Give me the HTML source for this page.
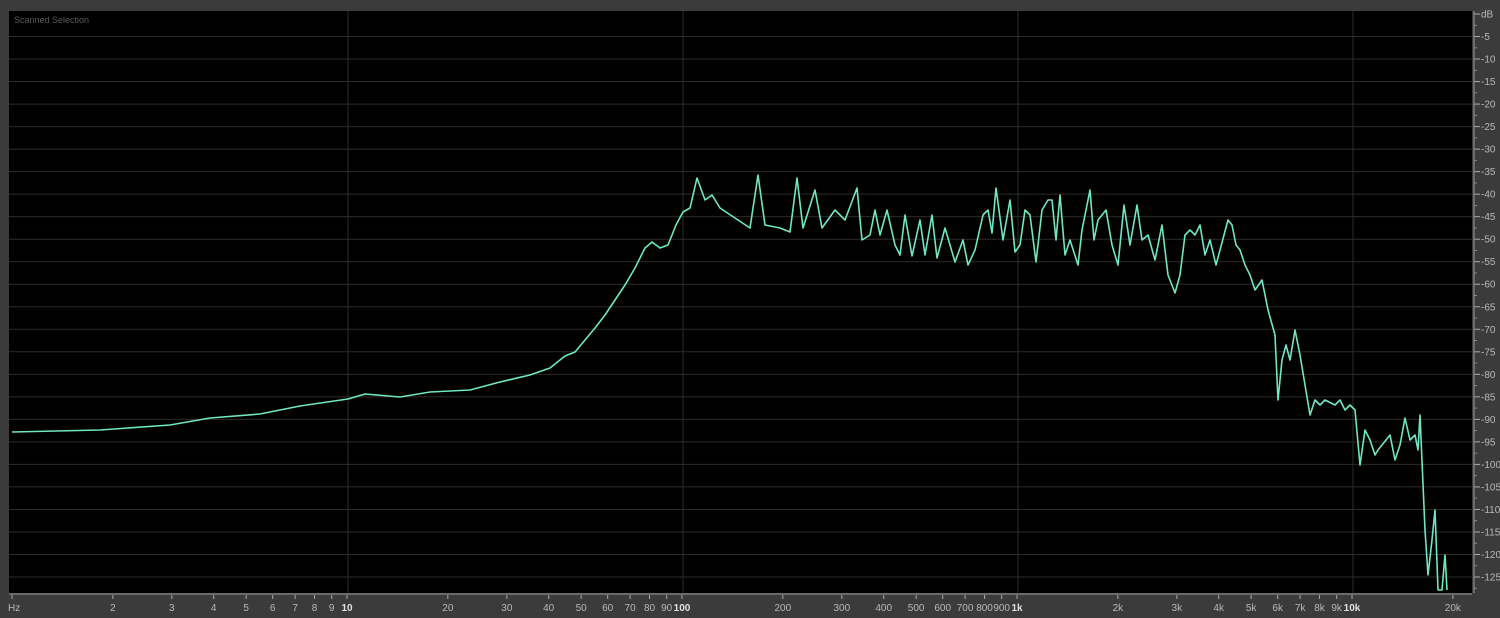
<!DOCTYPE html>
<html><head><meta charset="utf-8"><style>
html,body{margin:0;padding:0;background:#3b3b3b;width:1500px;height:618px;overflow:hidden;font-family:"Liberation Sans",sans-serif}
svg{position:absolute;left:0;top:0}
</style></head><body>
<svg id="s" width="1500" height="618" xmlns="http://www.w3.org/2000/svg">
<rect x="0" y="0" width="1500" height="618" fill="#3b3b3b"/>
<rect x="9" y="11" width="1463" height="582" fill="#000"/>
<g id="grid"></g>
<text x="14" y="23" font-size="9" fill="#5a5a5a">Scanned Selection</text>
<g id="lab" font-size="10" fill="#b8b8b8"></g>
<polyline fill="none" stroke="#6fe6c4" stroke-width="1.6" stroke-linejoin="round" points="12,432 100,430 170,425 210,418 260,414 300,406 348,399 365,394 400,397 430,392 470,390 500,382 530,375 550,368 565,356 575,352 585,340 595,328 605,315 615,300 625,285 635,268 645,248 652,242 660,248 668,245 676,225 683,212 690,208 697,178 705,200 712,195 720,208 735,218 750,228 758,175 765,225 780,228 790,232 797,178 803,228 815,190 822,228 835,210 845,220 857,188 862,240 870,235 875,210 880,235 887,210 895,245 900,255 905,215 912,256 920,220 925,255 932,215 937,258 945,228 955,262 963,240 968,265 975,250 983,215 988,210 992,233 996,188 1003,240 1010,200 1015,252 1020,245 1025,210 1030,215 1036,262 1042,210 1048,200 1052,200 1056,240 1060,195 1065,255 1070,240 1078,265 1082,230 1090,190 1094,240 1098,220 1106,210 1112,245 1118,265 1124,205 1130,245 1137,205 1142,240 1148,235 1155,260 1162,225 1168,275 1175,293 1180,275 1185,235 1190,230 1195,235 1200,225 1205,255 1210,240 1216,265 1220,250 1228,220 1232,225 1236,245 1240,250 1245,265 1250,275 1255,290 1262,280 1268,310 1275,335 1278,400 1282,360 1286,345 1290,360 1295,330 1300,355 1305,385 1310,415 1315,400 1320,405 1325,400 1335,405 1340,400 1345,410 1350,405 1355,410 1360,465 1365,430 1370,440 1375,455 1378,450 1382,445 1390,435 1395,460 1400,445 1405,418 1410,440 1415,435 1418,450 1420,415 1425,530 1428,575 1432,540 1435,510 1438,590 1442,590 1445,555 1447,590"/>
</svg>
<script>
var ns="http://www.w3.org/2000/svg",g=document.getElementById('grid'),l=document.getElementById('lab');
function el(p,t,a,txt){var e=document.createElementNS(ns,t);for(var k in a)e.setAttribute(k,a[k]);if(txt)e.textContent=txt;p.appendChild(e);return e;}
for(var k=0;k<=25;k++){var y=14+k*22.52;
 if(k>0)el(g,'line',{x1:9,x2:1472,y1:y,y2:y,stroke:'#2c2c2c','stroke-width':1});
 el(l,'text',{x:1481,y:y+3.5},k==0?'dB':'-'+(k*5));
 el(l,'line',{x1:1474,x2:1480,y1:y,y2:y,stroke:'#aaa'});
 el(l,'line',{x1:1474,x2:1477,y1:y+11.26,y2:y+11.26,stroke:'#888'});}
el(l,'line',{x1:1474,x2:1474,y1:11,y2:593,stroke:'#999'});
el(l,'line',{x1:9,x2:1472,y1:594,y2:594,stroke:'#999'});
[348,683,1018,1353].forEach(function(x){el(g,'line',{x1:x,x2:x,y1:11,y2:593,stroke:'#22302a'});});
function X(f){return 12+335*Math.log10(f);}
var labs=[[1,'Hz']];
[1,10,100,1000].forEach(function(d){for(var i=2;i<=9;i++){var f=i*d;var t=d>=1000?(i*d/1000)+'k':''+f;labs.push([f,t]);}labs.push([d*10,d*10>=1000?(d*10/1000)+'k':''+(d*10)]);});
labs.push([20000,'20k']);
labs.forEach(function(a){var x=X(a[0]);el(l,'line',{x1:x,x2:x,y1:595,y2:599,stroke:'#aaa'});
 var big=[10,100,1000,10000].indexOf(a[0])>=0;
 el(l,'text',{x:a[1]=='Hz'?8:x,y:611,'text-anchor':a[1]=='Hz'?'start':'middle','font-weight':big?'bold':'normal','fill':big?'#e0e0e0':'#b8b8b8'},a[1]);});
</script>
</body></html>
